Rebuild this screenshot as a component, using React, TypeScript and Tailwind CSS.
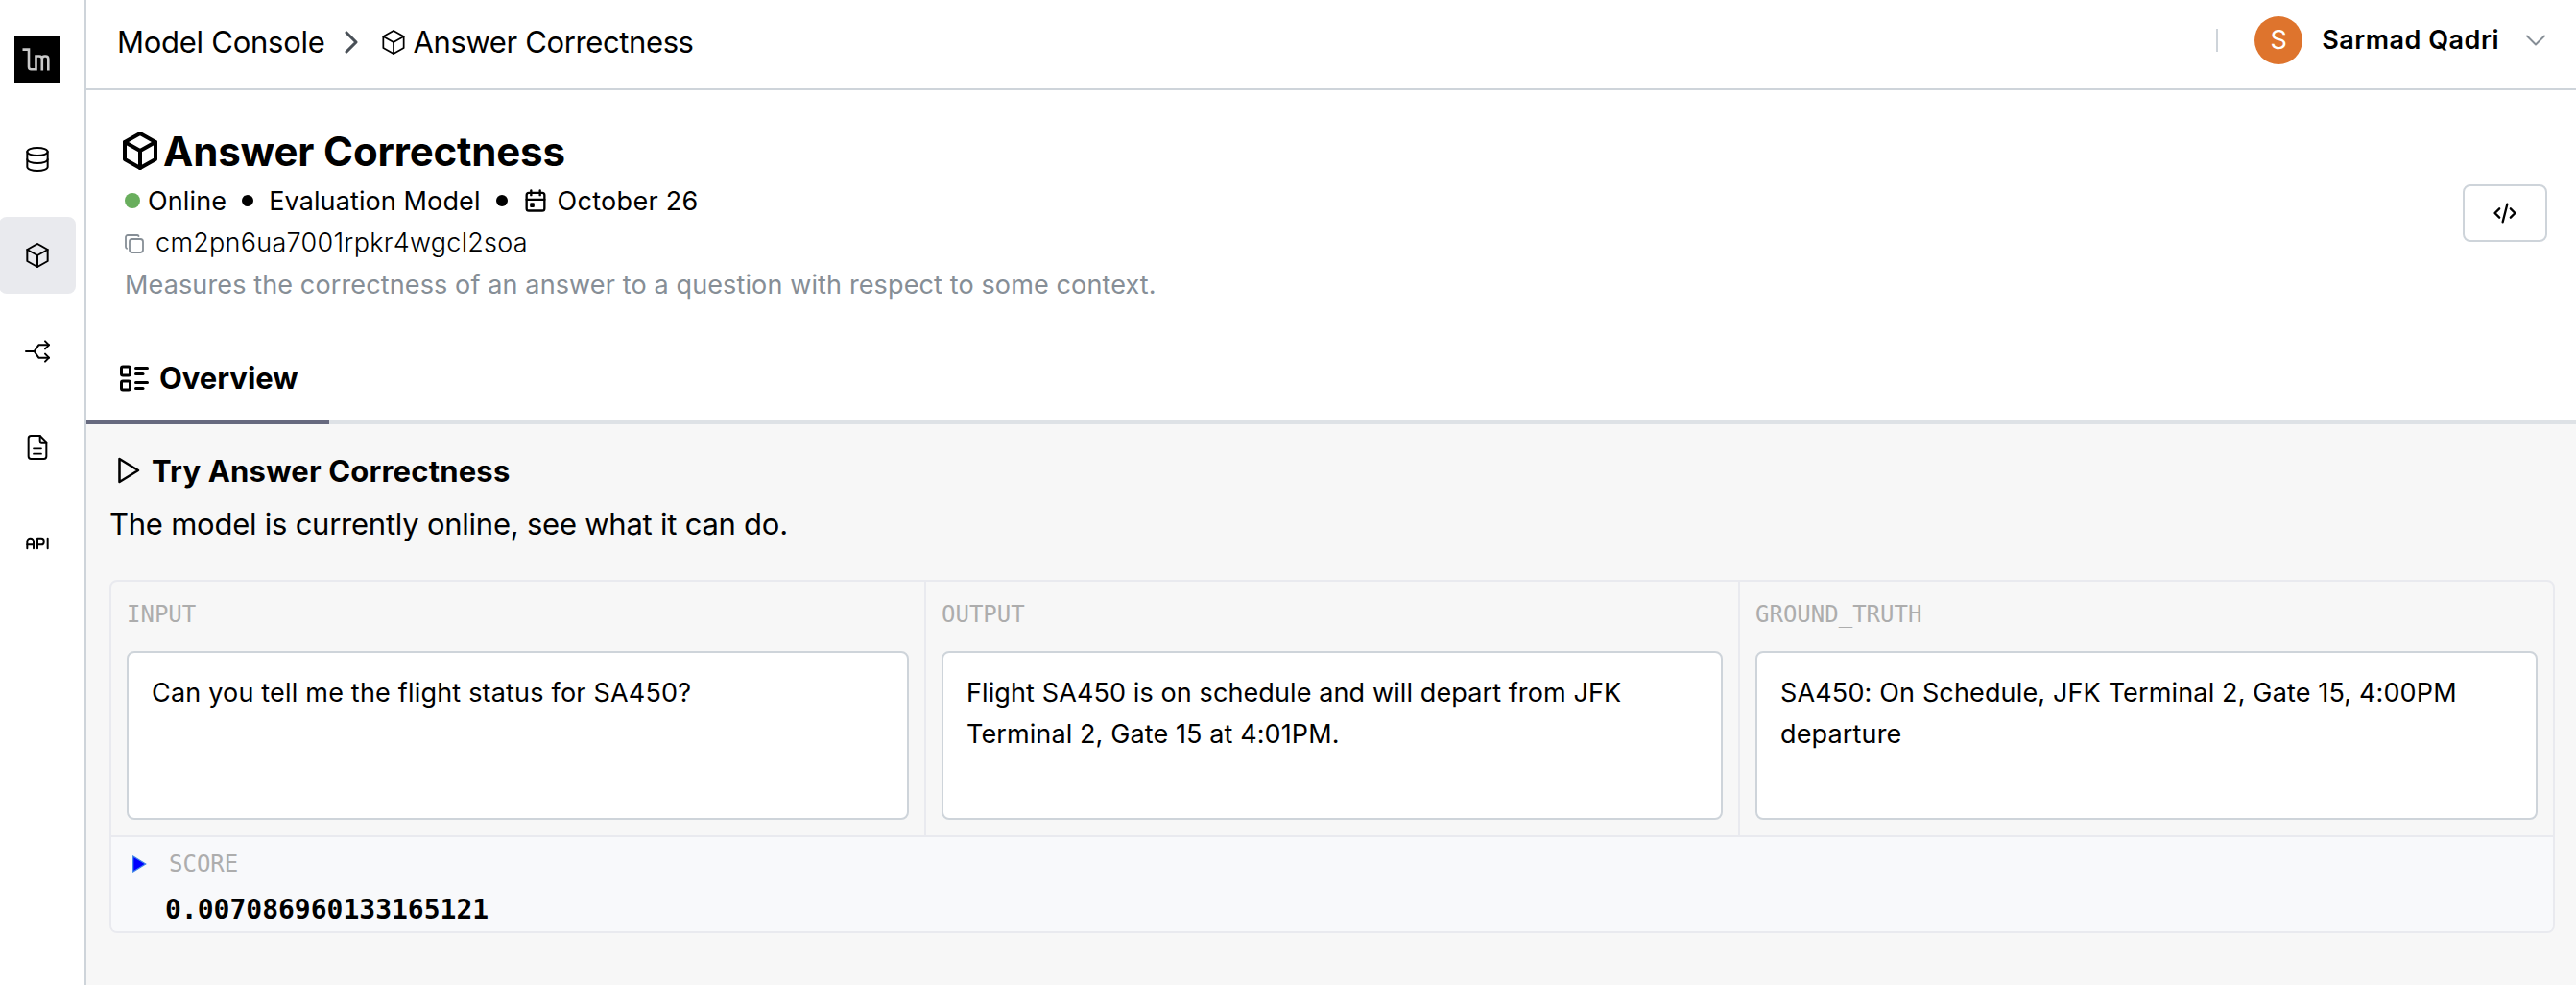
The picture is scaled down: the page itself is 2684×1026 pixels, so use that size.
import React from "react";
import {
  TbApi,
  TbArrowsSplit,
  TbBox,
  TbCalendarEvent,
  TbChevronDown,
  TbChevronRight,
  TbCode,
  TbCopy,
  TbDatabase,
  TbListDetails,
  TbPlayerPlay,
} from "react-icons/tb";

function FileIcon() {
  return (
    <svg width="32" height="32" viewBox="0 0 24 24" fill="none" stroke="currentColor" strokeWidth="1.5" strokeLinecap="round" strokeLinejoin="round">
      <path d="M14 3v4a1 1 0 0 0 1 1h4" />
      <path d="M17 21H7a2 2 0 0 1-2-2V5a2 2 0 0 1 2-2h7l5 5v11a2 2 0 0 1-2 2z" />
      <path d="M9 13h6M9 17h6" strokeWidth="1.3" />
    </svg>
  );
}

function Logo() {
  return (
    <svg className="ml-[15px] shrink-0 bg-black" width="48" height="48" viewBox="0 0 48 48" fill="none" stroke="#c9c9c9" strokeWidth="2.6">
      <path d="M8.5 13.6H15V31.5Q15 34.3 17.5 34.3H22.5V20.5H26Q28.8 20.5 28.8 23.5V35.5M28.8 23.5Q28.8 20.5 31.5 20.5H32.5Q35.3 20.5 35.3 23.5V35.5" />
    </svg>
  );
}

function NavItem({ active = false, children }: { active?: boolean; children: React.ReactNode }) {
  return (
    <a className={active ? "-ml-px flex h-20 w-20 items-center justify-center rounded-lg bg-[#e9eaee]" : "-ml-px flex h-20 w-20 items-center justify-center"}>
      {children}
    </a>
  );
}

function Sidebar() {
  return (
    <aside className="flex w-[90px] shrink-0 flex-col border-r-2 border-[#ced4da] bg-white pt-[38px]">
      <Logo />
      <nav className="mt-10 flex flex-col gap-5">
        <NavItem><TbDatabase size={32} strokeWidth={1.5} /></NavItem>
        <NavItem active><TbBox size={32} strokeWidth={1.5} /></NavItem>
        <NavItem><TbArrowsSplit size={32} strokeWidth={1.5} /></NavItem>
        <NavItem><FileIcon /></NavItem>
        <NavItem><TbApi size={32} strokeWidth={1.5} /></NavItem>
      </nav>
    </aside>
  );
}

function Header() {
  return (
    <header className="flex h-[94px] shrink-0 justify-between border-b-2 border-[#ced4da] pr-6 pl-8 whitespace-nowrap">
      <div className="flex items-center pb-1 text-[31px]">
        <span className="tracking-[-0.265px]">Model Console</span>
        <TbChevronRight className="ml-[7px] text-[#495057]" size={40} strokeWidth={1.9} />
        <TbBox className="ml-2" size={32} strokeWidth={1.3} />
        <span className="ml-[5px] tracking-[-0.38px]">Answer Correctness</span>
      </div>
      <div className="flex items-center pb-2">
        <span className="h-6 w-0.5 bg-[#ced4da]" />
        <span className="ml-[38px] flex size-[50px] items-center justify-center rounded-full bg-[#de742d] text-[27px] text-white">S</span>
        <span className="ml-5 text-[27px] font-semibold tracking-[0.5px]">Sarmad Qadri</span>
        <TbChevronDown className="ml-5 text-[#868e96]" size={36} strokeWidth={1.3} />
      </div>
    </header>
  );
}

function Dot() {
  return <span className="-mt-0.5 size-3 rounded-full bg-black" />;
}

function ModelSummary() {
  return (
    <section className="mt-8 flex h-48 items-center justify-between pr-[30px] pl-8 whitespace-nowrap">
      <div className="text-[27px]">
        <h1 className="flex h-[62px] items-center text-[42px] font-bold tracking-[-0.173px]">
          <TbBox size={48} strokeWidth={2} />
          <span>Answer Correctness</span>
        </h1>
        <div className="flex h-11 items-center gap-4 pl-2">
          <div className="flex items-center gap-2">
            <span className="-mt-0.5 size-4 rounded-full bg-[#69ae5d]" />
            <span className="tracking-[0.134px]">Online</span>
          </div>
          <Dot />
          <span className="tracking-[0.109px]">Evaluation Model</span>
          <Dot />
          <div className="flex items-center gap-2">
            <TbCalendarEvent className="-mt-0.5 -ml-px" size={28} strokeWidth={2} />
            <span className="ml-px tracking-[0.297px]">October 26</span>
          </div>
        </div>
        <div className="flex h-[43px] items-center gap-[10px] pl-[6px] font-light">
          <TbCopy className="text-[#868e96]" size={24} strokeWidth={1.8} />
          <span className="tracking-[0.28px]">cm2pn6ua7001rpkr4wgcl2soa</span>
        </div>
        <p className="flex h-[43px] items-center pt-0.5 pl-2 tracking-[0.128px] text-[#868e96]">
          Measures the correctness of an answer to a question with respect to some context.
        </p>
      </div>
      <button className="flex h-[60px] w-[88px] items-center justify-center rounded-lg border-2 border-[#ced4da]">
        <TbCode size={28} strokeWidth={2} />
      </button>
    </section>
  );
}

function Tabs() {
  return (
    <div className="mt-8 flex h-[92px]">
      <div className="flex w-[253px] items-center gap-2 border-b-4 border-[#676a7f] pl-8 text-[31px] font-bold">
        <TbListDetails size={36} strokeWidth={2} />
        <span className="tracking-[-0.03px]">Overview</span>
      </div>
      <div className="flex-1 border-b-4 border-[#dee2e6]" />
    </div>
  );
}

const fields = [
  { label: "INPUT", text: "Can you tell me the flight status for SA450?", tracking: "tracking-[0.192px]", divider: true },
  { label: "OUTPUT", text: "Flight SA450 is on schedule and will depart from JFK Terminal 2, Gate 15 at 4:01PM.", tracking: "tracking-[0.107px]", divider: true },
  { label: "GROUND_TRUTH", text: "SA450: On Schedule, JFK Terminal 2, Gate 15, 4:00PM departure", tracking: "tracking-[0.148px]", divider: false },
];

function Playground() {
  return (
    <main className="flex-1 bg-[#f7f7f7] pt-6 pr-[22px] pl-6">
      <h2 className="flex h-[50px] items-center gap-2 text-[31px] font-bold">
        <TbPlayerPlay className="-mt-0.5" size={36} strokeWidth={1.7} />
        <span className="tracking-[0.183px]">Try Answer Correctness</span>
      </h2>
      <p className="flex h-[60px] items-center text-[31px] tracking-[-0.24px]">
        The model is currently online, see what it can do.
      </p>
      <div className="mt-7 overflow-hidden rounded-lg border-2 border-[#e9eaef]">
        <div className="grid h-[266px] grid-cols-[849px_848px_847px] border-b-2 border-[#e9eaef]">
          {fields.map((f) => (
            <div key={f.label} className={f.divider ? "border-r-2 border-[#e9eaef] p-4" : "p-4"}>
              <div className="h-9 font-['DejaVu_Sans_Mono',monospace] text-[24px] leading-9 text-[#adadad]">{f.label}</div>
              <div className="mt-5 h-44 rounded-lg border-2 border-[#ced4da] bg-white px-6 pt-5 text-[27px] leading-[43.4px]">
                <span className={f.tracking}>{f.text}</span>
              </div>
            </div>
          ))}
        </div>
        <div className="h-[98px] bg-[#f8f9fb] pt-2 font-['DejaVu_Sans_Mono',monospace]">
          <div className="flex h-10 items-center pl-[22px] text-[24px] text-[#adadad]">
            <svg width="15" height="18" viewBox="0 0 15 18">
              <path d="M0.7 1v16l13-8z" fill="#0000ff" stroke="#3f86e8" strokeWidth="1.2" />
            </svg>
            <span className="ml-[23px]">SCORE</span>
          </div>
          <div className="mt-[5px] pl-[56px] text-[28px] leading-[46px] font-bold">0.007086960133165121</div>
        </div>
      </div>
    </main>
  );
}

export default function App() {
  return (
    <div className="flex h-[1026px] w-[2684px] overflow-hidden bg-white font-['Inter',sans-serif] text-black">
      <Sidebar />
      <div className="flex min-w-0 flex-1 flex-col">
        <Header />
        <ModelSummary />
        <Tabs />
        <Playground />
      </div>
    </div>
  );
}
